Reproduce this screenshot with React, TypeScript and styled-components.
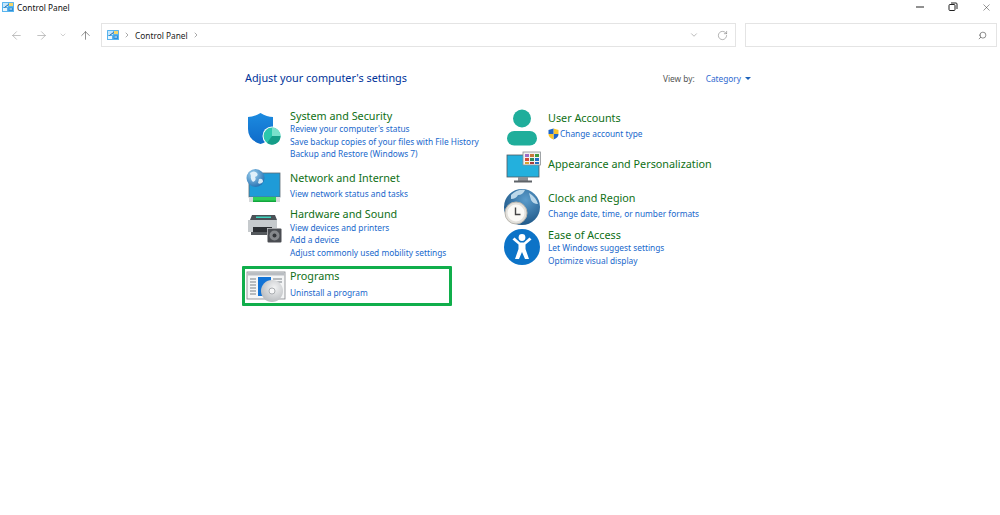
import React from "react";
import styled, { createGlobalStyle } from "styled-components";
import { ArrowLeft, ArrowRight, ArrowUp, ChevronDown, ChevronRight, RotateCw, Search, X } from "lucide-react";

const GlobalStyle = createGlobalStyle`
  html, body {
    margin: 0;
    height: 100%;
    background: #fff;
    overflow: hidden;
  }
  body {
    font-family: "Noto Sans", "Open Sans", "Liberation Sans", sans-serif;
  }
`;

const Window = styled.div`
  width: 1000px;
  height: 515px;
  display: flex;
  flex-direction: column;
  overflow: hidden;
`;

const TitleBar = styled.div`
  height: 14px;
  margin-right: -3.5px;
  display: flex;
  align-items: center;
  padding-left: 2px;
  color: #111;
  font-size: 8.3px;
  line-height: 14px;
`;

const TitleText = styled.span`
  margin: 1px 0 0 3px;
  flex: 1;
`;

const WinButton = styled.div`
  width: 33.5px;
  height: 14px;
  display: flex;
  align-items: center;
  justify-content: center;
  color: #222;
`;

const NavRow = styled.div`
  margin-top: 9px;
  height: 24px;
  display: flex;
  align-items: center;
  padding-left: 9.5px;
`;

const NavButton = styled.div<{ $w: number; $dim?: boolean }>`
  width: ${(p) => p.$w}px;
  height: 24px;
  display: flex;
  align-items: center;
  justify-content: flex-start;
  color: ${(p) => (p.$dim ? "#a0a0a0" : "#555")};
`;

const Field = styled.div`
  box-sizing: border-box;
  height: 24px;
  border: 1.5px solid #e4e4e4;
  display: flex;
  align-items: center;
`;

const AddressBox = styled(Field)`
  width: 635px;
  padding-left: 5px;
  color: #222;
  font-size: 8.3px;
`;

const SearchBox = styled(Field)`
  width: 252px;
  margin-left: 9px;
  justify-content: flex-end;
  padding-right: 9px;
  color: #444;
`;

const Crumb = styled.span`
  margin: 0 0 0 4px;
`;

const Sep = styled.span`
  display: flex;
  margin-left: 4px;
  color: #555;
`;

const AddressTools = styled.div`
  margin-left: auto;
  display: flex;
  align-items: center;
  gap: 18px;
  padding-right: 7px;
  color: #777;
`;

const Content = styled.main`
  padding: 24px 0 0 245px;
`;

const Header = styled.div`
  width: 506px;
  height: 14px;
  display: flex;
  align-items: center;
  justify-content: space-between;
`;

const Heading = styled.h1`
  margin: 0;
  font-size: 10.85px;
  font-weight: 400;
  line-height: 14px;
  color: #003399;
`;

const ViewBy = styled.div`
  display: flex;
  align-items: center;
  font-size: 8.3px;
  color: #555;
`;

const ViewLink = styled.a`
  margin-left: 11px;
  color: #2f6ad0;
`;

const Caret = styled.span`
  margin-left: 4px;
  width: 0;
  height: 0;
  border-left: 3px solid transparent;
  border-right: 3px solid transparent;
  border-top: 3px solid #1c62b9;
`;

const Columns = styled.div`
  margin-top: 24px;
  display: grid;
  grid-template-columns: 258px 258px;
`;

const Column = styled.div`
  display: flex;
  flex-direction: column;
`;

const Item = styled.section<{ $top?: number }>`
  position: relative;
  display: flex;
  margin-top: ${(p) => p.$top ?? 0}px;
`;

const IconSlot = styled.div<{ $lift: number }>`
  flex: 0 0 45px;
  height: 0;
  svg {
    display: block;
    margin-top: ${(p) => p.$lift}px;
    overflow: visible;
  }
`;

const ItemTitle = styled.h2`
  margin: 0;
  font-size: 10.8px;
  font-weight: 400;
  line-height: 13px;
  color: #0f7016;
`;

const Links = styled.div<{ $gap?: number }>`
  display: flex;
  flex-direction: column;
  margin-top: ${(p) => p.$gap ?? 1}px;
`;

const ItemLink = styled.a`
  display: flex;
  align-items: center;
  font-size: 8.33px;
  line-height: 12.5px;
  color: #2068cc;
  white-space: nowrap;
  svg {
    margin-right: 1px;
  }
`;

const Highlight = styled.span`
  position: absolute;
  left: -3px;
  top: -3px;
  width: 204px;
  height: 34px;
  border: 3px solid #10ae4b;
  border-radius: 1px;
`;

const CpIcon = () => (
  <svg width="12" height="10" viewBox="0 0 12 10">
    <rect width="12" height="10" rx="0.5" fill="#58b4ee" />
    <rect x="1" y="1" width="5" height="4" fill="#c5e6fb" />
    <rect x="7" y="1" width="4" height="3" fill="#f3d56b" />
    <rect x="1" y="6" width="4" height="3" fill="#e9f5fc" />
    <rect x="6.5" y="5.5" width="4.5" height="3.5" fill="#2f8fd6" />
    <path d="M2.5 5.5 L6.5 2.5" stroke="#17609e" strokeWidth="1" />
    <path d="M7.5 7 H10" stroke="#dff1fc" strokeWidth="1" />
  </svg>
);

const RestoreIcon = () => (
  <svg width="10" height="10" viewBox="0 0 10 10" fill="none" stroke="#222" strokeWidth="1">
    <rect x="1" y="2.5" width="6" height="6" rx="1" />
    <path d="M3 1 H8 Q9 1 9 2 V7" />
  </svg>
);

const UacShield = () => (
  <svg width="11" height="12" viewBox="0 0 11 12">
    <path d="M5.5 6 H10.5 Q10.5 9.5 5.5 11.5 Z" fill="#1f66c8" />
    <path d="M5.5 6 H0.5 Q0.5 9.5 5.5 11.5 Z" fill="#f7c52e" />
    <path d="M5.5 0.5 L10.5 2 V6 H5.5 Z" fill="#f7c52e" />
    <path d="M5.5 0.5 L0.5 2 V6 H5.5 Z" fill="#1f66c8" />
  </svg>
);

const Art = ({ lift = -4, children }: { lift?: number; children: React.ReactNode }) => (
  <IconSlot $lift={lift}>
    <svg width="45" height="45" viewBox="0 0 45 45">
      {children}
    </svg>
  </IconSlot>
);

const ShieldArt = () => (
  <Art>
    <defs>
      <linearGradient id="sh" x1="0" y1="0" x2="0" y2="1">
        <stop offset="0" stopColor="#1c8be0" />
        <stop offset="1" stopColor="#0f6bc9" />
      </linearGradient>
    </defs>
    <path d="M15.5 8 Q22 12 28 12 V24 Q28 35 15.5 39 Q3 35 3 24 V12 Q9 12 15.5 8 Z" fill="url(#sh)" />
    <circle cx="27" cy="31" r="9.5" fill="#fff" />
    <circle cx="27" cy="31" r="8.5" fill="#2bc7ad" />
    <path d="M27 31 V22.5 A8.5 8.5 0 0 1 35.5 31 Z" fill="#79e0cc" />
    <path d="M27 31 H35.5 A8.5 8.5 0 0 1 22 38 Z" fill="#159d88" />
  </Art>
);

const NetworkArt = () => (
  <Art lift={-3}>
    <defs>
      <radialGradient id="gl" cx="0.35" cy="0.3" r="0.8">
        <stop offset="0" stopColor="#9fd2f0" />
        <stop offset="1" stopColor="#1c69ad" />
      </radialGradient>
    </defs>
    <rect x="4" y="5" width="31" height="24" fill="#1f9bd7" stroke="#5d6b75" strokeWidth="0.8" />
    <rect x="4" y="29" width="31" height="5" fill="#d6d9db" />
    <rect x="8" y="29" width="23" height="5" fill="#2fd15c" />
    <rect x="8" y="32.5" width="23" height="1.5" fill="#12a63d" />
    <circle cx="10.5" cy="10" r="9" fill="url(#gl)" />
    <path d="M5 5 Q9 2 12 5 Q14 8 10 9 Q12 12 8 14 Q5 11 6 8 Z" fill="#e0f0fa" />
    <path d="M14 11 Q18 10 18 14 Q15 17 13 15 Z" fill="#d4e9f6" />
  </Art>
);

const PrinterArt = () => (
  <Art lift={-3}>
    <path d="M7 11 H30 L32 16 H5 Z" fill="#4b5157" />
    <rect x="11" y="12.5" width="15" height="1.5" fill="#3fd6c0" />
    <rect x="3" y="16" width="29" height="12" fill="#c6cacd" />
    <rect x="8" y="23" width="19" height="5" fill="#2c2f33" />
    <rect x="6" y="28" width="22" height="3" fill="#54585c" />
    <rect x="22" y="24" width="15" height="15" rx="1" fill="#fff" />
    <rect x="22.5" y="24.5" width="14" height="14" rx="1" fill="#4a4d52" />
    <circle cx="29.5" cy="31.5" r="5" fill="#85888c" />
    <circle cx="29.5" cy="31.5" r="2" fill="#33363a" />
  </Art>
);

const ProgramsArt = () => (
  <Art lift={-3}>
    <defs>
      <radialGradient id="disc" cx="0.6" cy="0.35" r="0.8">
        <stop offset="0" stopColor="#f2f3f4" />
        <stop offset="1" stopColor="#aeb1b5" />
      </radialGradient>
    </defs>
    <rect x="2" y="6" width="38" height="27" fill="#f4f5f6" stroke="#7f8388" strokeWidth="0.8" />
    <rect x="2.5" y="6.5" width="37" height="3" fill="#b9bdc2" />
    <path d="M5 13 H11 M5 16 H11 M5 19 H11 M5 22 H11 M5 25 H11 M5 28 H11 M28 13 H37 M28 16 H37" stroke="#7b8187" strokeWidth="1" />
    <rect x="13" y="11" width="13" height="19" fill="#1273d6" />
    <circle cx="27" cy="25" r="11" fill="url(#disc)" />
    <circle cx="27" cy="25" r="3" fill="#f7f7f8" stroke="#9b9ea2" strokeWidth="0.8" />
  </Art>
);

const UserArt = () => (
  <Art>
    <circle cx="19" cy="11.5" r="9" fill="#1fae9b" />
    <rect x="4" y="24" width="30" height="14.5" rx="7.2" fill="#1fae9b" />
  </Art>
);

const AppearanceArt = () => (
  <Art>
    <rect x="4" y="2" width="32" height="22" fill="#23b0dd" stroke="#4f5a62" strokeWidth="0.8" />
    <rect x="15" y="24" width="10" height="4" fill="#8c9196" />
    <rect x="11" y="27.5" width="18" height="2" fill="#5e6368" />
    <rect x="20" y="-1" width="17.5" height="13" fill="#f2f2f2" stroke="#8b8f93" strokeWidth="0.8" />
    <rect x="22" y="1" width="4" height="3" fill="#9d6bc4" />
    <rect x="27" y="1" width="4" height="3" fill="#c8773a" />
    <rect x="32" y="1" width="4" height="3" fill="#3f9a3f" />
    <rect x="22" y="5" width="4" height="3" fill="#d14b3b" />
    <rect x="27" y="5" width="4" height="3" fill="#2c8a5a" />
    <rect x="32" y="5" width="4" height="3" fill="#1f6fc4" />
    <rect x="22" y="9" width="4" height="2" fill="#d8a32e" />
    <rect x="27" y="9" width="4" height="2" fill="#a83c3c" />
    <rect x="32" y="9" width="4" height="2" fill="#1f6fc4" />
  </Art>
);

const ClockArt = () => (
  <Art>
    <defs>
      <radialGradient id="earth" cx="0.6" cy="0.3" r="0.8">
        <stop offset="0" stopColor="#5b9ccb" />
        <stop offset="1" stopColor="#174f80" />
      </radialGradient>
    </defs>
    <circle cx="19" cy="20" r="18" fill="url(#earth)" />
    <path d="M8 8 Q14 2 22 3 Q20 8 15 8 Q13 12 8 12 Z M26 6 Q33 10 35 17 Q30 17 28 13 Z" fill="#bcd8ea" />
    <circle cx="13" cy="26" r="11" fill="#e3e1dc" stroke="#b8b5ae" strokeWidth="1" />
    <circle cx="13" cy="26" r="8.5" fill="#fbfaf7" />
    <path d="M12.5 20.5 V27.5 H17.5" fill="none" stroke="#444" strokeWidth="1.4" />
  </Art>
);

const AccessArt = () => (
  <Art>
    <circle cx="19" cy="23" r="18" fill="#0c73c7" />
    <circle cx="19" cy="13.5" r="3.4" fill="#fff" />
    <path d="M9.5 15.5 L15.5 20.5 V25 L12 35 H16 L19 28 L22 35 H26 L22.5 25 V20.5 L28.5 15.5 L26.5 13.5 L21 18.5 H17 L11.5 13.5 Z" fill="#fff" />
  </Art>
);

export default function App() {
  return (
    <Window>
      <GlobalStyle />
      <TitleBar>
        <CpIcon />
        <TitleText>Control Panel</TitleText>
        <WinButton>
          <svg width="10" height="2" viewBox="0 0 10 2"><path d="M1 1 H9" stroke="#222" strokeWidth="1" /></svg>
        </WinButton>
        <WinButton><RestoreIcon /></WinButton>
        <WinButton><X size={11} strokeWidth={1} /></WinButton>
      </TitleBar>
      <NavRow>
        <NavButton $w={25} $dim><ArrowLeft size={13} strokeWidth={1.2} /></NavButton>
        <NavButton $w={24.5} $dim><ArrowRight size={13} strokeWidth={1.2} /></NavButton>
        <NavButton $w={19.5} $dim><ChevronDown size={8} strokeWidth={1.5} /></NavButton>
        <NavButton $w={22.5}><ArrowUp size={13} strokeWidth={1.2} /></NavButton>
        <AddressBox>
          <CpIcon />
          <Sep><ChevronRight size={8} strokeWidth={1.5} /></Sep>
          <Crumb>Control Panel</Crumb>
          <Sep><ChevronRight size={8} strokeWidth={1.5} /></Sep>
          <AddressTools>
            <ChevronDown size={10} strokeWidth={1.2} />
            <RotateCw size={11} strokeWidth={1.2} />
          </AddressTools>
        </AddressBox>
        <SearchBox>
          <Search size={9} strokeWidth={1.6} style={{ transform: "scaleX(-1)" }} />
        </SearchBox>
      </NavRow>
      <Content>
        <Header>
          <Heading>Adjust your computer's settings</Heading>
          <ViewBy>
            View by:
            <ViewLink>Category</ViewLink>
            <Caret />
          </ViewBy>
        </Header>
        <Columns>
          <Column>
            <Item>
              <ShieldArt />
              <div>
                <ItemTitle>System and Security</ItemTitle>
                <Links>
                  <ItemLink>Review your computer's status</ItemLink>
                  <ItemLink>Save backup copies of your files with File History</ItemLink>
                  <ItemLink>Backup and Restore (Windows 7)</ItemLink>
                </Links>
              </div>
            </Item>
            <Item $top={10}>
              <NetworkArt />
              <div>
                <ItemTitle>Network and Internet</ItemTitle>
                <Links $gap={4}>
                  <ItemLink>View network status and tasks</ItemLink>
                </Links>
              </div>
            </Item>
            <Item $top={7}>
              <PrinterArt />
              <div>
                <ItemTitle>Hardware and Sound</ItemTitle>
                <Links $gap={1.5}>
                  <ItemLink>View devices and printers</ItemLink>
                  <ItemLink>Add a device</ItemLink>
                  <ItemLink>Adjust commonly used mobility settings</ItemLink>
                </Links>
              </div>
            </Item>
            <Item $top={9.5}>
              <ProgramsArt />
              <div>
                <ItemTitle>Programs</ItemTitle>
                <Links $gap={5}>
                  <ItemLink>Uninstall a program</ItemLink>
                </Links>
              </div>
              <Highlight />
            </Item>
          </Column>
          <Column>
            <Item $top={2}>
              <UserArt />
              <div>
                <ItemTitle>User Accounts</ItemTitle>
                <Links $gap={4}>
                  <ItemLink><UacShield />Change account type</ItemLink>
                </Links>
              </div>
            </Item>
            <Item $top={16}>
              <AppearanceArt />
              <div>
                <ItemTitle>Appearance and Personalization</ItemTitle>
              </div>
            </Item>
            <Item $top={21}>
              <ClockArt />
              <div>
                <ItemTitle>Clock and Region</ItemTitle>
                <Links $gap={4}>
                  <ItemLink>Change date, time, or number formats</ItemLink>
                </Links>
              </div>
            </Item>
            <Item $top={8}>
              <AccessArt />
              <div>
                <ItemTitle>Ease of Access</ItemTitle>
                <Links>
                  <ItemLink>Let Windows suggest settings</ItemLink>
                  <ItemLink>Optimize visual display</ItemLink>
                </Links>
              </div>
            </Item>
          </Column>
        </Columns>
      </Content>
    </Window>
  );
}
